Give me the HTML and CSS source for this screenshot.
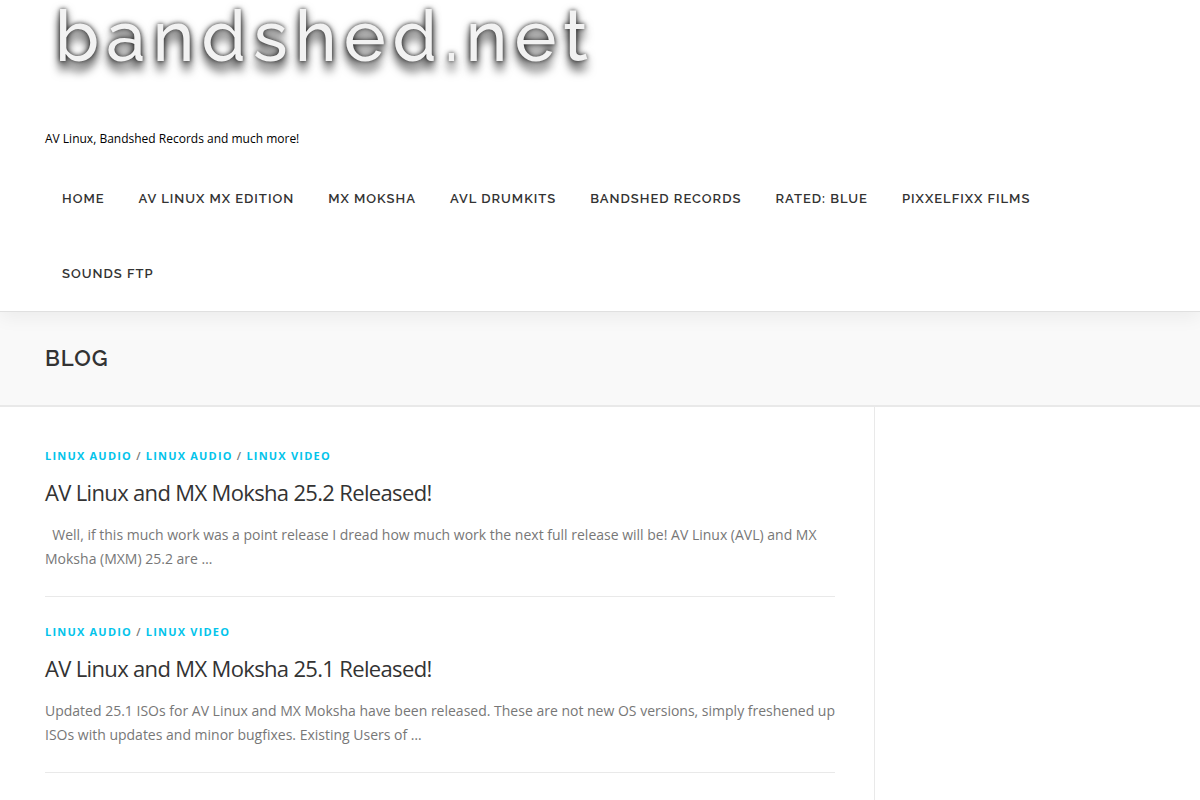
FILE: index.html
```html
<!DOCTYPE html>
<html lang="en">
<head>
<meta charset="utf-8">
<meta name="viewport" content="width=device-width, initial-scale=1">
<title>Blog – bandshed.net</title>
<link rel="stylesheet" href="styles.css">
</head>
<body>
<header class="site-header">
  <div class="container">
    <a class="logo" href="#">bandshed.net</a>
    <p class="tagline">AV Linux, Bandshed Records and much more!</p>
    <nav class="main-nav" aria-label="Main">
      <a href="#">Home</a>
      <a href="#">AV Linux MX Edition</a>
      <a href="#">MX Moksha</a>
      <a href="#">AVL Drumkits</a>
      <a href="#">Bandshed Records</a>
      <a href="#">Rated: Blue</a>
      <a href="#">PixxelFixx Films</a>
      <a href="#">Sounds FTP</a>
    </nav>
  </div>
</header>
<div class="page-header">
  <div class="container">
    <h1 class="page-title">Blog</h1>
  </div>
</div>
<div class="container content">
  <main class="posts">
    <article class="post">
      <div class="cats"><a href="#">Linux Audio</a> / <a href="#">Linux Audio</a> / <a href="#">Linux Video</a></div>
      <h2 class="post-title"><a href="#">AV Linux and MX Moksha 25.2 Released!</a></h2>
      <p class="excerpt">&nbsp; Well, if this much work was a point release I dread how much work the next full release will be! AV Linux (AVL) and MX Moksha (MXM) 25.2 are …</p>
    </article>
    <article class="post">
      <div class="cats"><a href="#">Linux Audio</a> / <a href="#">Linux Video</a></div>
      <h2 class="post-title"><a href="#">AV Linux and MX Moksha 25.1 Released!</a></h2>
      <p class="excerpt">Updated 25.1 ISOs for AV Linux and MX Moksha have been released. These are not new OS versions, simply freshened up ISOs with updates and minor bugfixes. Existing Users of …</p>
    </article>
  </main>
  <aside class="sidebar"></aside>
</div>
</body>
</html>
```
FILE: styles.css
```css
* {
  box-sizing: border-box;
}

body {
  margin: 0;
  min-height: 100vh;
  display: flex;
  flex-direction: column;
  background: #fff;
  color: #777;
  font: 14px/24px "Open Sans", "Noto Sans", sans-serif;
}

a {
  color: inherit;
  text-decoration: none;
}

h1,
h2,
p {
  margin: 0;
}

.container {
  width: 100%;
  max-width: 1140px;
  margin: 0 auto;
  padding: 0 15px;
}

.site-header {
  position: relative;
  background: #fff;
  border-bottom: 1px solid #e0e0e0;
  box-shadow: 0 5px 18px rgba(0, 0, 0, 0.06);
}

.logo {
  display: block;
  padding: 0 0 55px 10px;
  color: #f2f2f2;
  font: 500 71px/72px Raleway, Lato, sans-serif;
  letter-spacing: 7px;
  text-shadow: 0 0 4px rgba(0, 0, 0, 0.7), 0 2px 8px rgba(0, 0, 0, 0.6), 0 10px 10px rgba(0, 0, 0, 0.6);
}

.tagline {
  padding-bottom: 10px;
  color: #000;
  font-size: 12px;
}

.main-nav {
  display: flex;
  flex-wrap: wrap;
}

.main-nav a {
  padding: 0 17px;
  color: #333;
  font: 600 13px/75px Raleway, Lato, sans-serif;
  letter-spacing: 1px;
  text-transform: uppercase;
}

.page-header {
  padding: 30px 0 31px;
  background: #f9f9f9;
  border-bottom: 2px solid #e9e9e9;
}

.page-title {
  color: #333;
  font: 600 22px/32px Raleway, Lato, sans-serif;
  letter-spacing: 1px;
  text-transform: uppercase;
}

.content {
  flex: 1;
  display: flex;
}

.posts {
  flex: 1;
  padding: 14px 39px 0 0;
}

.sidebar {
  flex: 0 0 281px;
  border-left: 1px solid #e9e9e9;
}

.post {
  padding: 25px 0;
  border-bottom: 1px solid #e9e9e9;
}

.cats {
  font-size: 11px;
  font-weight: 600;
  line-height: 19px;
  letter-spacing: 0.11em;
  text-transform: uppercase;
}

.cats a {
  color: #03c4eb;
  font-weight: 700;
}

.post-title {
  margin: 11px 0 14px;
  color: #333;
  font-size: 22px;
  font-weight: 400;
  line-height: 33px;
  letter-spacing: -0.03em;
}
```
